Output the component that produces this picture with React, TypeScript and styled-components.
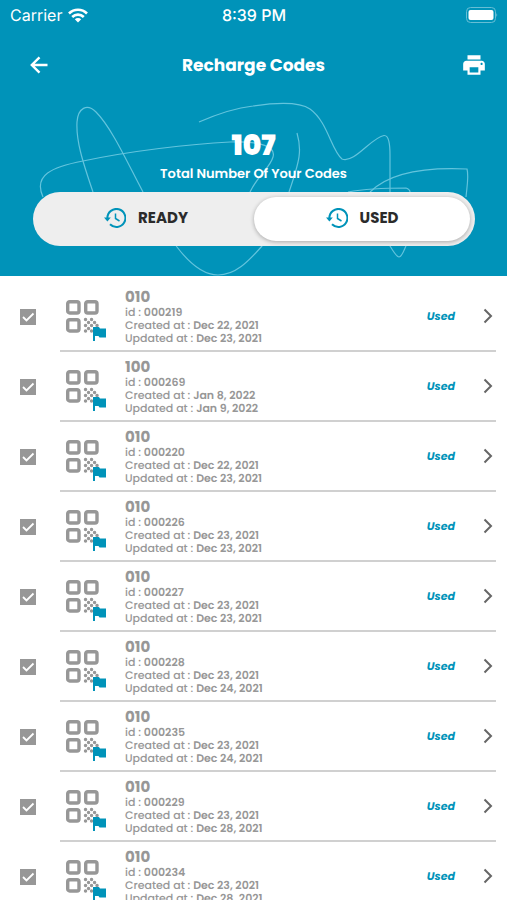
import React from 'react';
import styled, { createGlobalStyle } from 'styled-components';
import { MdPrint } from 'react-icons/md';

const TEAL = '#0093b9';
const GREY = '#979797';

const GlobalStyle = createGlobalStyle`
  *, *::before, *::after { box-sizing: border-box; }
  body {
    margin: 0;
    background: #fff;
    font-family: Poppins, Inter, 'Open Sans', sans-serif;
    text-rendering: geometricPrecision;
  }
  button, input { font: inherit; }
`;

const Page = styled.div`
  display: flex;
  flex-direction: column;
  height: 100vh;
  overflow: hidden;
`;

const Header = styled.header`
  position: relative;
  flex: none;
  padding-bottom: 30px;
  background: ${TEAL};
  color: #fff;
`;

const Doodle = styled.svg`
  position: absolute;
  inset: 0;
  width: 100%;
  height: 100%;
`;

const StatusBar = styled.div`
  position: relative;
  display: grid;
  grid-template-columns: 1fr auto 1fr;
  align-items: center;
  height: 30px;
  padding: 0 9px 0 10px;
  font-family: Inter, 'Liberation Sans', sans-serif;
  font-size: 16px;
  line-height: 20px;
`;

const Carrier = styled.span`
  display: flex;
  align-items: center;
  gap: 6px;
`;

const Clock = styled.span`
  font-weight: 500;
`;

const Battery = styled.svg`
  justify-self: end;
`;

const NavBar = styled.nav`
  position: relative;
  display: grid;
  grid-template-columns: 1fr auto 1fr;
  align-items: center;
  height: 70px;
  padding: 0 20px;
`;

const IconButton = styled.button`
  display: flex;
  padding: 0;
  border: 0;
  background: none;
  color: inherit;
  cursor: pointer;
`;

const BackButton = styled(IconButton)`
  justify-self: start;
  padding: 0 10px;
`;

const PrintButton = styled(IconButton)`
  justify-self: end;
`;

const Title = styled.h1`
  margin: 0;
  font-size: 17px;
  line-height: 26px;
  font-weight: 700;
`;

const Summary = styled.div`
  position: relative;
  display: flex;
  flex-direction: column;
  align-items: center;
  padding-top: 28px;
`;

const Total = styled.strong`
  font-size: 28px;
  line-height: 36px;
  font-weight: 900;
`;

const TotalLabel = styled.span`
  font-size: 13px;
  line-height: 20px;
  font-weight: 600;
`;

const Toggle = styled.div`
  position: relative;
  display: grid;
  grid-template-columns: 1fr 1fr;
  margin: 8px 32px 0 33px;
  padding: 5px;
  border-radius: 27px;
  background: #eee;
`;

const ToggleOption = styled.button<{ $active?: boolean }>`
  display: flex;
  align-items: center;
  justify-content: center;
  gap: 12px;
  height: 44px;
  padding: 0 0 3px;
  border: 0;
  border-radius: 22px;
  background: ${(p) => (p.$active ? '#fff' : 'transparent')};
  box-shadow: ${(p) => (p.$active ? '0 1px 4px rgba(0, 0, 0, 0.3)' : 'none')};
  color: #2b2b2b;
  font-size: 15px;
  line-height: 22px;
  font-weight: 700;
  cursor: pointer;
`;

const List = styled.ul`
  flex: 1;
  min-height: 0;
  margin: 0;
  padding: 6px 11px 0 20px;
  overflow-y: auto;
  scrollbar-width: none;
  list-style: none;
`;

const Row = styled.li`
  display: flex;
  align-items: center;
  gap: 24px;
`;

const Check = styled.input`
  appearance: none;
  flex: none;
  width: 16px;
  height: 16px;
  margin: 0;
  border: 2px solid ${GREY};
  &:checked {
    border: 0;
    background: ${GREY}
      url("data:image/svg+xml,%3Csvg xmlns='http://www.w3.org/2000/svg' viewBox='0 0 16 16'%3E%3Cpath d='M3 8l3.500 3.500L13.500 4.500' fill='none' stroke='white' stroke-width='1.800'/%3E%3C/svg%3E");
  }
`;

const RowBody = styled.div`
  display: flex;
  flex: 1;
  align-items: center;
  height: 70px;
  padding-left: 5px;
  border-bottom: 2px solid #d0d0d0;
`;

const CodeIcon = styled.svg`
  flex: none;
  margin-top: 8px;
`;

const Details = styled.div`
  flex: 1;
  padding: 1px 0 0 18px;
  color: ${GREY};
`;

const CodeName = styled.h2`
  margin: 0;
  font-size: 15px;
  line-height: 17px;
  font-weight: 700;
`;

const Line = styled.p`
  margin: 0;
  font-size: 11px;
  line-height: 13px;
  font-weight: 500;
`;

const Value = styled.span`
  font-weight: 600;
`;

const State = styled.em`
  color: ${TEAL};
  font-size: 11px;
  line-height: 16px;
  font-weight: 700;
`;

const OpenButton = styled(IconButton)`
  margin-left: 27px;
  color: #666;
`;

const HistoryIcon = () => (
  <svg width="22" height="20" viewBox="0 0 22 20" fill="none" aria-hidden="true">
    <path d="M3.400 10A9 9 0 1 1 6 16.300" stroke={TEAL} strokeWidth="2" />
    <path d="M0 9.500H6.800L3.400 13.500Z" fill={TEAL} />
    <path d="M11.500 5.500V10.500L15.500 13" stroke={TEAL} strokeWidth="1.500" />
  </svg>
);

const QrFlagIcon = () => (
  <CodeIcon width="42" height="42" viewBox="0 0 42 42" fill="none" aria-hidden="true">
    <g stroke={GREY} strokeWidth="3.400">
      <rect x="2.700" y="2.700" width="11.300" height="11.300" rx="2" />
      <rect x="20.700" y="2.700" width="11.300" height="11.300" rx="2" />
      <rect x="2.700" y="20.700" width="11.300" height="11.300" rx="2" />
    </g>
    <path
      d="M20.500 20.500h.1M26.500 20.500h.1M23.500 23.500h.1M29.500 23.500h.1M26.500 26.500h.1M32 26.500h.1M20.500 26.500h.1M23.500 29.500h.1M20.500 32h.1M26.500 32h.1"
      stroke={GREY}
      strokeWidth="3.400"
      strokeLinecap="round"
    />
    <path d="M28 28h6l1 1.500h6v9h-6.500l-1-1.500H30v5h-2z" fill={TEAL} />
  </CodeIcon>
);

const CODES = [
  { name: '010', id: '000219', created: 'Dec 22, 2021', updated: 'Dec 23, 2021' },
  { name: '100', id: '000269', created: 'Jan 8, 2022', updated: 'Jan 9, 2022' },
  { name: '010', id: '000220', created: 'Dec 22, 2021', updated: 'Dec 23, 2021' },
  { name: '010', id: '000226', created: 'Dec 23, 2021', updated: 'Dec 23, 2021' },
  { name: '010', id: '000227', created: 'Dec 23, 2021', updated: 'Dec 23, 2021' },
  { name: '010', id: '000228', created: 'Dec 23, 2021', updated: 'Dec 24, 2021' },
  { name: '010', id: '000235', created: 'Dec 23, 2021', updated: 'Dec 24, 2021' },
  { name: '010', id: '000229', created: 'Dec 23, 2021', updated: 'Dec 28, 2021' },
  { name: '010', id: '000234', created: 'Dec 23, 2021', updated: 'Dec 28, 2021' },
];

export default function App() {
  const [tab, setTab] = React.useState('USED');
  return (
    <Page>
      <GlobalStyle />
      <Header>
        <Doodle viewBox="0 0 507 276" preserveAspectRatio="xMidYMid slice" fill="none" stroke="#63c4dd" strokeWidth="1.200" aria-hidden="true">
          <path d="M93 192C82 160 76 140 77 122C78 108 87 103 96 112C112 128 128 164 143 192L177 247C190 264 203 275 218 275C235 275 248 262 262 246L289 192C300 160 302 150 297 133" />
          <path d="M43 197C33 175 52 167 83 161C130 151 190 144 230 142C262 141 276 147 273 157C270 168 258 175 250 192" />
          <path d="M199 122C215 115 235 108 253 106C280 102 300 102 310 109C328 122 331 150 342 159C354 164 372 137 384 135.500C389 135 390 145 390 155V246C393 251 397 257 399 257C402 257 404 250 406 246" />
          <path d="M370 192C390 172 425 167 467 169C469 176 467 186 466 197" />
          <path d="M348 192C370 188 392 188 406 188C409 189 410 190 410 192" />
        </Doodle>
        <StatusBar>
          <Carrier>
            Carrier
            <svg width="20" height="15" viewBox="0 0 20 15" fill="none" stroke="#fff" strokeWidth="2.600" aria-label="Wi-Fi">
              <path d="M1 5.500C6 .5 14 .5 19 5.500M4.200 9C7.500 5.800 12.500 5.800 15.800 9" />
              <path d="M10 14.500L6.800 11.300C8.500 9.700 11.500 9.700 13.200 11.300Z" fill="#fff" stroke="none" />
            </svg>
          </Carrier>
          <Clock>8:39 PM</Clock>
          <Battery width="33" height="16" viewBox="0 0 33 16" aria-label="Battery full">
            <rect x="1.500" y=".5" width="29" height="15" rx="4" fill="none" stroke="#66bed5" />
            <rect x="3.500" y="3" width="25" height="10" rx="2" fill="#fff" />
            <path d="M31.500 6q1.500 2 0 4z" fill="#8bd0e2" />
          </Battery>
        </StatusBar>
        <NavBar>
          <BackButton aria-label="Back">
            <svg width="18" height="18" viewBox="0 0 18 18" fill="none" stroke="currentColor" strokeWidth="2.400" aria-hidden="true">
              <path d="M17.500 9H2.500M9.500 1.300L1.800 9l7.700 7.700" />
            </svg>
          </BackButton>
          <Title>Recharge Codes</Title>
          <PrintButton aria-label="Print"><MdPrint size={26} /></PrintButton>
        </NavBar>
        <Summary>
          <Total>107</Total>
          <TotalLabel>Total Number Of Your Codes</TotalLabel>
        </Summary>
        <Toggle>
          {['READY', 'USED'].map((name) => (
            <ToggleOption key={name} $active={tab === name} aria-pressed={tab === name} onClick={() => setTab(name)}>
              <HistoryIcon />
              {name}
            </ToggleOption>
          ))}
        </Toggle>
      </Header>
      <List>
        {CODES.map((code) => (
          <Row key={code.id}>
            <Check type="checkbox" defaultChecked aria-label={`Select code ${code.id}`} />
            <RowBody>
              <QrFlagIcon />
              <Details>
                <CodeName>{code.name}</CodeName>
                <Line>id : <Value>{code.id}</Value></Line>
                <Line>Created at : <Value>{code.created}</Value></Line>
                <Line>Updated at : <Value>{code.updated}</Value></Line>
              </Details>
              <State>Used</State>
              <OpenButton aria-label={`Open code ${code.id}`}>
                <svg width="14" height="16" viewBox="0 0 14 16" fill="none" stroke="currentColor" strokeWidth="2" aria-hidden="true">
                  <path d="M2.500 1.500l6.500 6.500L2.500 14.500" />
                </svg>
              </OpenButton>
            </RowBody>
          </Row>
        ))}
      </List>
    </Page>
  );
}
